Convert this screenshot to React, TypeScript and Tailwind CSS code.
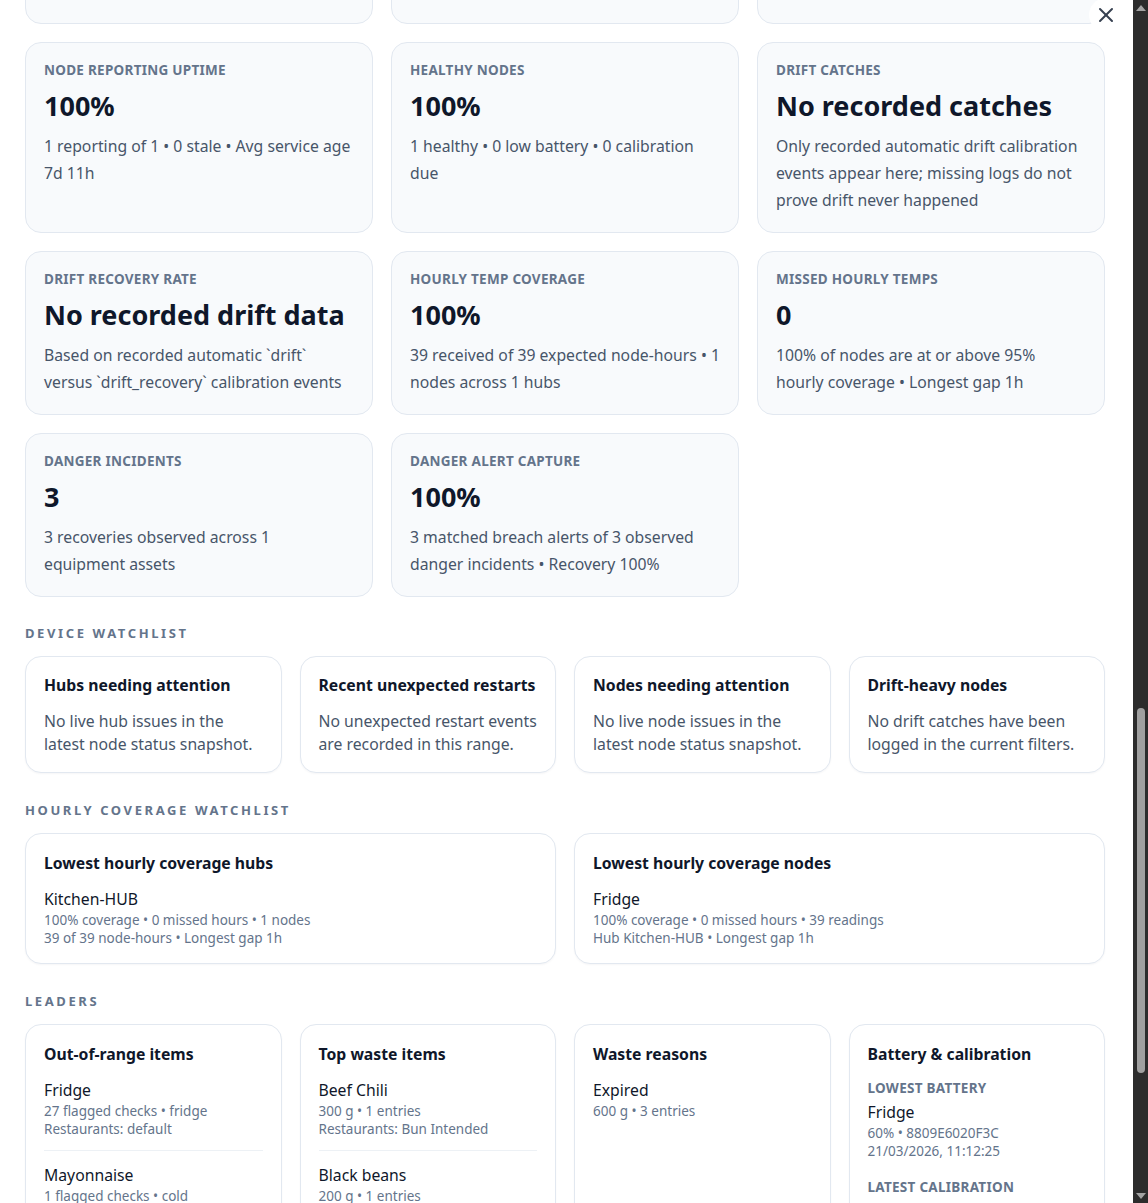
import React from "react";
import { X } from "lucide-react";

type Stat = { label: string; value: string; desc: string };

const statRows: Stat[][] = [
  [
    {
      label: "Node reporting uptime",
      value: "100%",
      desc: "1 reporting of 1 • 0 stale • Avg service age 7d 11h",
    },
    {
      label: "Healthy nodes",
      value: "100%",
      desc: "1 healthy • 0 low battery • 0 calibration due",
    },
    {
      label: "Drift catches",
      value: "No recorded catches",
      desc: "Only recorded automatic drift calibration events appear here; missing logs do not prove drift never happened",
    },
  ],
  [
    {
      label: "Drift recovery rate",
      value: "No recorded drift data",
      desc: "Based on recorded automatic `drift` versus `drift_recovery` calibration events",
    },
    {
      label: "Hourly temp coverage",
      value: "100%",
      desc: "39 received of 39 expected node-hours • 1 nodes across 1 hubs",
    },
    {
      label: "Missed hourly temps",
      value: "0",
      desc: "100% of nodes are at or above 95% hourly coverage • Longest gap 1h",
    },
  ],
  [
    {
      label: "Danger incidents",
      value: "3",
      desc: "3 recoveries observed across 1 equipment assets",
    },
    {
      label: "Danger alert capture",
      value: "100%",
      desc: "3 matched breach alerts of 3 observed danger incidents • Recovery 100%",
    },
  ],
];

const watchlist = [
  { title: "Hubs needing attention", desc: "No live hub issues in the latest node status snapshot." },
  { title: "Recent unexpected restarts", desc: "No unexpected restart events are recorded in this range." },
  { title: "Nodes needing attention", desc: "No live node issues in the latest node status snapshot." },
  { title: "Drift-heavy nodes", desc: "No drift catches have been logged in the current filters." },
];

type Entry = { name: string; lines: string[] };

const coverage: { title: string; entry: Entry }[] = [
  {
    title: "Lowest hourly coverage hubs",
    entry: {
      name: "Kitchen-HUB",
      lines: ["100% coverage • 0 missed hours • 1 nodes", "39 of 39 node-hours • Longest gap 1h"],
    },
  },
  {
    title: "Lowest hourly coverage nodes",
    entry: {
      name: "Fridge",
      lines: ["100% coverage • 0 missed hours • 39 readings", "Hub Kitchen-HUB • Longest gap 1h"],
    },
  },
];

const leaders: { title: string; entries: Entry[] }[] = [
  {
    title: "Out-of-range items",
    entries: [
      { name: "Fridge", lines: ["27 flagged checks • fridge", "Restaurants: default"] },
      { name: "Mayonnaise", lines: ["1 flagged checks • cold"] },
    ],
  },
  {
    title: "Top waste items",
    entries: [
      { name: "Beef Chili", lines: ["300 g • 1 entries", "Restaurants: Bun Intended"] },
      { name: "Black beans", lines: ["200 g • 1 entries"] },
    ],
  },
  {
    title: "Waste reasons",
    entries: [{ name: "Expired", lines: ["600 g • 3 entries"] }],
  },
];

const capsLabel = "text-[13.5px] font-bold uppercase leading-[18px] tracking-[0.02em] text-[#64748b]";

function StatCard({ stat }: { stat: Stat }) {
  return (
    <div className="rounded-2xl border border-[#e2e8f0] bg-[#f8fafc] px-[18px] pt-[18px] pb-[18px]">
      <div className={capsLabel}>{stat.label}</div>
      <div className="mt-[10px] text-[27px] font-bold leading-[34px] text-[#0f172a]">{stat.value}</div>
      <p className="mt-[10px] text-[15.75px] leading-[27px] text-[#475569]">{stat.desc}</p>
    </div>
  );
}

function SectionTitle({ children }: { children: React.ReactNode }) {
  return (
    <h3 className="text-[13px] font-bold uppercase leading-[18px] tracking-[0.2em] text-[#64748b]">
      {children}
    </h3>
  );
}

function Panel({ title, compact, children }: { title: string; compact?: boolean; children?: React.ReactNode }) {
  return (
    <div
      className={`rounded-2xl border border-[#e2e8f0] bg-white px-[18px] pb-[16px] shadow-[0_1px_2px_rgba(15,23,42,0.04)] ${
        compact ? "pt-[16px]" : "pt-[17px]"
      }`}
    >
      <div className="text-[15.75px] font-bold leading-[24px] text-[#0f172a]">{title}</div>
      {children}
    </div>
  );
}

function EntryBlock({ entry }: { entry: Entry }) {
  return (
    <div>
      <div className="text-[15.75px] leading-[24px] text-[#0f172a]">{entry.name}</div>
      {entry.lines.map((l) => (
        <div key={l} className="text-[13.5px] leading-[18px] text-[#64748b]">
          {l}
        </div>
      ))}
    </div>
  );
}

function ScrollArrow({ up }: { up?: boolean }) {
  return (
    <div className="flex h-[15px] items-center justify-center">
      <svg width="10" height="6" viewBox="0 0 10 6">
        {up ? <polygon points="5,0 10,6 0,6" fill="#a3a3a3" /> : <polygon points="0,0 10,0 5,6" fill="#a3a3a3" />}
      </svg>
    </div>
  );
}

export default function App() {
  return (
    <div className="flex h-screen w-full overflow-hidden bg-white font-['Noto_Sans','DejaVu_Sans',sans-serif]">
      <main className="relative flex-1 overflow-hidden">
        <div className="-mt-[36px] pl-[25px] pr-[28px] pb-10">
          {/* lower edge of the previous row of stat cards, scrolled past */}
          <div className="grid grid-cols-3 gap-[18px]">
            <div className="h-[60px] rounded-2xl border border-[#e2e8f0] bg-[#f8fafc]" />
            <div className="h-[60px] rounded-2xl border border-[#e2e8f0] bg-[#f8fafc]" />
            <div className="h-[60px] rounded-2xl border border-[#e2e8f0] bg-[#f8fafc]" />
          </div>

          <div className="mt-[18px] flex flex-col gap-[18px]">
            {statRows.map((row, i) => (
              <div key={i} className="grid grid-cols-3 gap-[18px]">
                {row.map((s) => (
                  <StatCard key={s.label} stat={s} />
                ))}
              </div>
            ))}
          </div>

          <section className="mt-[27px]">
            <SectionTitle>Device watchlist</SectionTitle>
            <div className="mt-[14px] grid grid-cols-4 gap-[18px]">
              {watchlist.map((w) => (
                <Panel key={w.title} title={w.title} compact>
                  <p className="mt-[13px] text-[15.75px] leading-[23px] text-[#475569]">{w.desc}</p>
                </Panel>
              ))}
            </div>
          </section>

          <section className="mt-[28px]">
            <SectionTitle>Hourly coverage watchlist</SectionTitle>
            <div className="mt-[14px] grid grid-cols-2 gap-[18px]">
              {coverage.map((c) => (
                <Panel key={c.title} title={c.title}>
                  <div className="mt-3">
                    <EntryBlock entry={c.entry} />
                  </div>
                </Panel>
              ))}
            </div>
          </section>

          <section className="mt-[28px]">
            <SectionTitle>Leaders</SectionTitle>
            <div className="mt-[14px] grid grid-cols-4 gap-[18px]">
              {leaders.map((l) => (
                <Panel key={l.title} title={l.title}>
                  <div className="mt-3 divide-y divide-[#edf1f5]">
                    {l.entries.map((e, i) => (
                      <div key={e.name} className={i === 0 ? "pb-3" : "py-3"}>
                        <EntryBlock entry={e} />
                      </div>
                    ))}
                  </div>
                </Panel>
              ))}
              <Panel title="Battery & calibration">
                <div className={`mt-[13px] ${capsLabel}`}>Lowest battery</div>
                <div className="mt-[3px]">
                  <EntryBlock entry={{ name: "Fridge", lines: ["60% • 8809E6020F3C", "21/03/2026, 11:12:25"] }} />
                </div>
                <div className={`mt-[18px] ${capsLabel}`}>Latest calibration</div>
              </Panel>
            </div>
          </section>
        </div>

        <button
          type="button"
          aria-label="Close"
          className="absolute top-[-2px] right-[10px] flex h-[34px] w-[34px] items-center justify-center rounded-full bg-white text-[#374151]"
        >
          <X size={24} strokeWidth={2} />
        </button>
      </main>

      {/* scrollbar rail */}
      <div className="flex h-full w-[15px] flex-col bg-[#2c2c2c]">
        <ScrollArrow up />
        <div className="flex-1">
          <div className="mx-auto mt-[693px] h-[365px] w-[8px] rounded-full bg-[#a0a0a0]" />
        </div>
        <ScrollArrow />
      </div>
    </div>
  );
}
